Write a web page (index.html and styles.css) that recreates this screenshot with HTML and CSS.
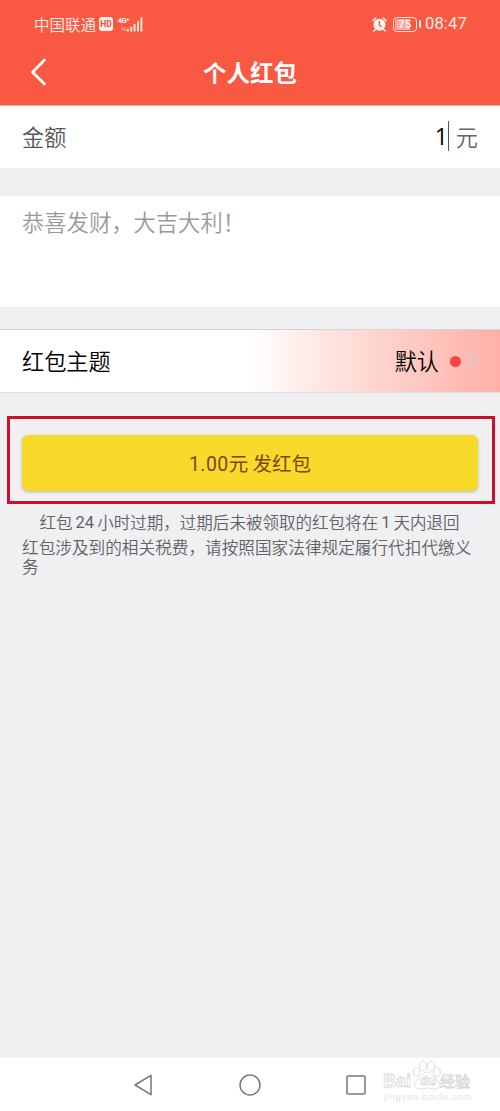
FILE: index.html
```html
<!DOCTYPE html>
<html lang="zh-CN">
<head>
<meta charset="utf-8">
<title>个人红包</title>
<link rel="stylesheet" href="styles.css">
</head>
<body>
<div class="screen">
  <header class="header">
    <div class="status">
      <div class="status-left">
        <span class="carrier">中国联通</span>
        <span class="hd">HD</span>
        <div class="network"><span class="net-type">4G<sup>+</sup></span><span class="net-sub">4G</span></div>
        <svg class="signal" width="16" height="15" viewBox="0 0 17 15" fill="#ffe9e3"><path d="M0 12h2v3H0zM3.500 10h2v5h-2zM7 7h2v8H7zM10.700 4h2v11h-2zM14.300 0h2v15h-2z"/></svg>
      </div>
      <div class="status-right">
        <svg class="alarm" width="15" height="15" viewBox="0 0 15 15"><circle cx="7.500" cy="7.700" r="6" fill="#fff3ef"/><path d="M1 3.700L3.800 1M14 3.700L11.200 1M3.400 12.500L1.900 14M11.600 12.500l1.500 1.500" stroke="#fff3ef" stroke-width="1.500" stroke-linecap="round"/><path d="M7.400 4.300v3.900l2.300 1.800" stroke="#f95942" stroke-width="1.400" fill="none"/></svg>
        <div class="battery"><span class="battery-level">75</span></div>
        <span class="battery-tip"></span>
        <span class="clock">08:47</span>
      </div>
    </div>
    <div class="navbar">
      <svg class="back" width="18" height="28" viewBox="0 0 18 28" fill="none" stroke="#fff" stroke-width="2.700" stroke-linecap="round" stroke-linejoin="round"><path d="M15.500 2L3.500 14.200 15.500 26"/></svg>
      <h1 class="title">个人红包</h1>
      <span></span>
    </div>
  </header>

  <main class="content">
    <section class="amount row">
      <span class="label">金额</span>
      <div class="amount-field"><span class="amount-value">1</span><span class="caret"></span><span class="unit">元</span></div>
    </section>
    <section class="message">恭喜发财，大吉大利！</section>
    <section class="theme row">
      <span>红包主题</span>
      <div class="theme-value"><span>默认</span><i class="dot"></i><svg width="13" height="20" viewBox="0 0 13 20" fill="none" stroke="#d5cccc" stroke-width="2.200"><path d="M1.500 1L11 10 1.500 19"/></svg></div>
    </section>
    <div class="highlight"><button class="send"><span class="send-sum">1.00</span>元 发红包</button></div>
    <div class="notes">
      <p class="expire"><span>红包</span><span class="num">24</span><span>小时过期，过期后未被领取的红包将在</span><span class="num">1</span><span>天内退回</span></p>
      <p class="tax">红包涉及到的相关税费，请按照国家法律规定履行代扣代缴义务</p>
    </div>
  </main>

  <footer class="system-nav">
    <svg width="20" height="24" viewBox="0 0 20 24"><path d="M18 2.300v19.400L2 12z"/></svg>
    <svg width="24" height="24" viewBox="0 0 24 24"><circle cx="12" cy="12" r="10"/></svg>
    <svg width="22" height="22" viewBox="0 0 22 22"><rect x="2" y="2" width="18" height="18" rx="1"/></svg>
    <div class="watermark">
      <svg width="92" height="46" viewBox="0 0 92 46">
        <g class="outline"><ellipse cx="34.500" cy="12" rx="3" ry="4.300"/><ellipse cx="41" cy="6" rx="3.600" ry="5"/><ellipse cx="49" cy="6" rx="3.600" ry="5"/><ellipse cx="55" cy="12" rx="3.300" ry="4.500"/><path d="M45 12c-5 0-6 5-10 8-5 4-2 9 3 9 3 0 4-1 7-1s4 1 7 1c6 0 8-5 3-9-4-3-5-8-10-8z"/></g>
        <text class="wm-brand" x="1" y="27" textLength="28" lengthAdjust="spacingAndGlyphs">Bai</text><text class="wm-du" x="38" y="25">du</text><text class="wm-cn" x="58" y="27">经验</text><text class="wm-url" x="2" y="40" textLength="87">jingyan.baidu.com</text>
      </svg>
    </div>
  </footer>
</div>
</body>
</html>
```
FILE: styles.css
```css
* { box-sizing: border-box; }
body { margin: 0; background: #f0f0f3; font-family: Roboto, "Noto Sans CJK SC", sans-serif; }
.screen { width: 500px; height: 1111px; display: flex; flex-direction: column; overflow: hidden; }
.header { height: 106px; flex: none; background: #f95942; border-bottom: 1px solid #fba79b; color: #fff; }
.status { height: 42px; padding: 6px 33px 0 34px; display: flex; justify-content: space-between; color: #ffede8; }
.status-left, .status-right { display: flex; align-items: center; height: 36px; }
.carrier { font: 350 15.500px/20px "Noto Sans CJK SC", sans-serif; }
.hd { width: 14px; height: 14px; margin-left: 3px; border-radius: 3px; background: #fff0ec; color: #e9543f; font: 700 8.500px/14px Roboto, sans-serif; text-align: center; }
.network { width: 12px; height: 15px; margin: 0 0 0 4px; display: flex; flex-direction: column; align-items: flex-end; justify-content: space-between; font: 700 7px/8px Roboto, sans-serif; }
.net-type { white-space: nowrap; font-size: 7.500px; letter-spacing: -.5px; }
.net-type sup { font-size: 6px; line-height: 1px; vertical-align: 2px; }
.net-sub { font-size: 5px; line-height: 5px; margin-right: 2px; opacity: .55; }
.signal { margin-left: -2px; }
.alarm { margin-right: 6px; }
.battery { width: 24px; height: 15px; border: 1px solid #ffe5df; border-radius: 4px; padding: 1px; }
.battery-level { display: block; width: 20px; height: 11px; border-radius: 2px; background: linear-gradient(90deg, #ffaaa0 76%, transparent 76%); color: #fff; font: 500 11px/11px Roboto, sans-serif; letter-spacing: .4px; text-align: center; }
.battery-tip { width: 2px; height: 8px; margin-left: 2px; background: #ffe5df; border-radius: 1px; }
.clock { margin-left: 4px; font-size: 16.500px; line-height: 20px; letter-spacing: .2px; }
.navbar { height: 60px; padding: 0 29px; display: grid; grid-template-columns: 18px 1fr 18px; align-items: center; }
.title { margin: 0; font: 700 23.500px/34px "Noto Sans CJK SC", sans-serif; text-align: center; }
.content { flex: 1; display: flex; flex-direction: column; }
.row { display: flex; align-items: center; justify-content: space-between; padding: 0 22px 2px; font: 350 22.200px/32px "Noto Sans CJK SC", sans-serif; flex: none; }
.amount { height: 62px; background: #fff; color: #555; }
.amount-field { display: flex; align-items: center; }
.amount-value { color: #000; font: 400 23px/30px "Open Sans", sans-serif; }
.caret { width: 1px; height: 30px; background: #555; }
.unit { margin-left: 7px; color: #666; }
.message { height: 111px; margin-top: 28px; padding: 9px 22px; background: #fff; color: #999; font: 350 22.300px/32px "Noto Sans CJK SC", sans-serif; flex: none; }
.theme { height: 64px; margin-top: 22px; border-top: 1px solid #d4d4d7; border-bottom: 1px solid #dedee1; background: linear-gradient(90deg, #fff 50%, #ffe3df 66%, #ffc9c2 83%, #ffb0a6 100%); color: #000; }
.theme-value { display: flex; align-items: center; margin-right: -1px; }
.theme-value svg, .dot { position: relative; top: 1px; }
.dot { width: 11px; height: 11px; margin: 0 6px 0 11px; border-radius: 50%; background: #fc4343; }
.theme-value svg { width: 12px; }
.highlight { height: 88px; margin: 23px 5px 0 7px; padding: 16px 12px 10px; border: 3px solid #c9112b; flex: none; }
.send { display: block; width: 456px; height: 56px; padding: 0; border: 0; border-radius: 6px; background: #f8da2b; color: #7d4615; box-shadow: 0 1px 3px #b8b8bb; font: 400 19.500px/56px "Noto Sans CJK SC", sans-serif; }
.send-sum { font-family: Roboto, sans-serif; letter-spacing: .4px; }
.notes { padding: 9px 20px 0 22px; color: #626266; font: 350 16.650px/19.500px "Noto Sans CJK SC", sans-serif; }
.expire { margin: 0 0 5px 17.500px; display: flex; gap: 3px; white-space: nowrap; font-size: 16.550px; }
.tax { margin: 0; }
.num { font-family: Roboto, sans-serif; font-weight: 400; }
.system-nav { height: 53px; flex: none; background: #fff; padding-left: 133px; display: flex; align-items: center; }
.system-nav > svg { fill: none; stroke: #777; stroke-width: 1.500; stroke-linejoin: round; flex: none; }
.system-nav > svg + svg { margin-left: 85px; }
.system-nav > svg:nth-child(3) { margin-left: 83px; }
.watermark { margin: 0 0 0 15px; height: 50px; flex: none; }
.outline { fill: #fff; stroke: #dedede; stroke-width: 1; }
.wm-brand, .wm-du, .wm-cn { fill: #fff; stroke: #d8d8d8; stroke-width: .8; font: 700 19px/1 "Liberation Sans", sans-serif; }
.wm-du { font-size: 13px; }
.wm-cn { font: 400 15px "Noto Sans CJK SC", sans-serif; }
.wm-url { fill: #e3e3e3; font: 400 9.500px "Liberation Sans", sans-serif; }
```
